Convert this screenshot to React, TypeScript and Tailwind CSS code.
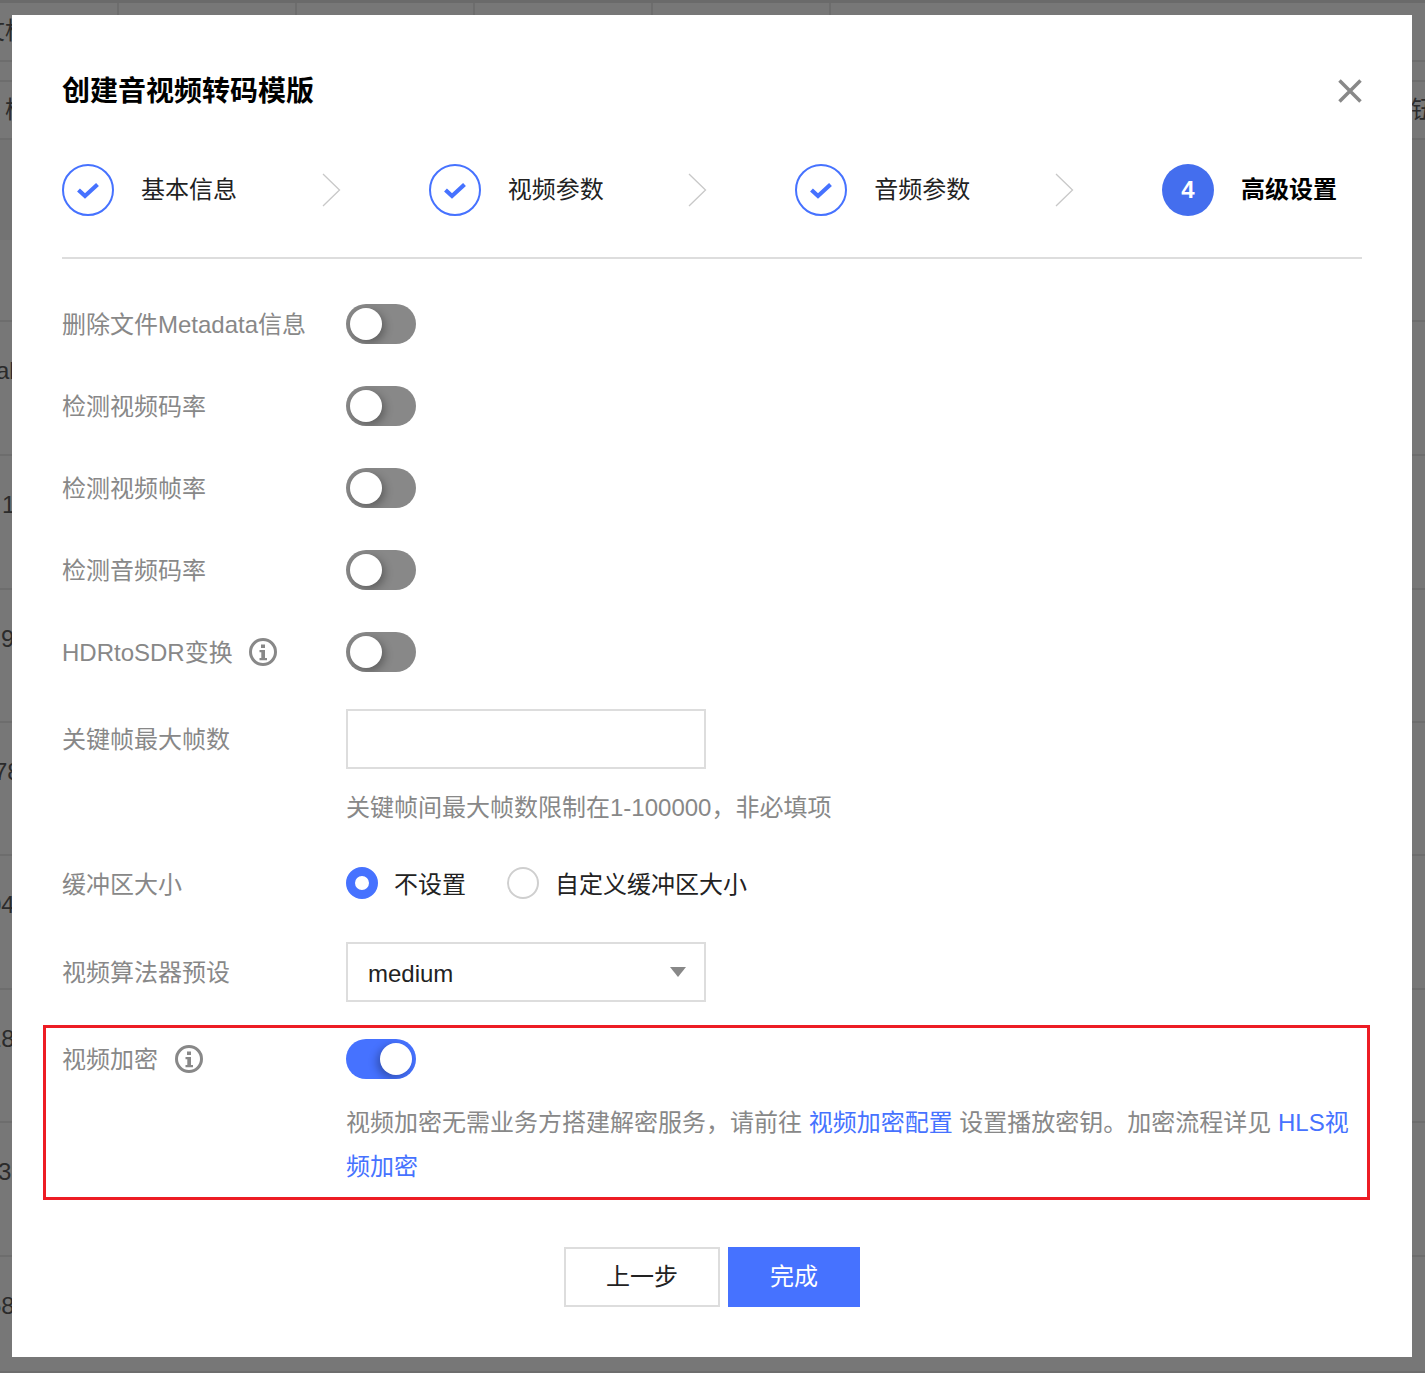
const font = "[font-family:'Liberation_Sans','Noto_Sans_CJK_SC',sans-serif]";

function Toggle({ on = false }: { on?: boolean }) {
  return (
    <div className={`relative h-10 w-[70px] overflow-hidden rounded-[20px] ${on ? "bg-[#4672ff]" : "bg-[#888888]"}`}>
      <div
        className={`absolute top-1 h-8 w-8 rounded-full bg-white ${
          on ? "left-[34px] shadow-[-3px_3px_8px_rgba(0,0,0,0.3)]" : "left-1 shadow-[3px_3px_8px_rgba(0,0,0,0.3)]"
        }`}
      />
    </div>
  );
}

function Info() {
  return (
    <svg width="28" height="28" viewBox="0 0 28 28" className="shrink-0">
      <circle cx="14" cy="14" r="12.500" fill="none" stroke="#888888" strokeWidth="3" />
      <rect x="12" y="6.500" width="4" height="3.500" fill="#888888" />
      <path d="M10.500 12h5.500v8h2v2.200h-7.500V20h1.800v-5.800h-1.800z" fill="#888888" />
    </svg>
  );
}

function Check() {
  return (
    <div className="flex h-[52px] w-[52px] items-center justify-center rounded-full border-2 border-[#4672ff]">
      <svg width="24" height="20" viewBox="0 0 24 20">
        <path d="M2.500 10L9 16L21.500 4.500" fill="none" stroke="#4672ff" strokeWidth="4.200" />
      </svg>
    </div>
  );
}

function Chevron() {
  return (
    <svg width="19" height="34" viewBox="0 0 19 34" className="shrink-0">
      <path d="M1 1l16.500 16L1 33" fill="none" stroke="#c8c8c8" strokeWidth="1.300" />
    </svg>
  );
}

function Step({ label }: { label: string }) {
  return (
    <div className="flex w-[366.67px] items-center justify-between pr-[88px]">
      <div className="flex items-center gap-[27px]">
        <Check />
        <span className="text-[24px] leading-[36px] text-[#222222]">{label}</span>
      </div>
      <Chevron />
    </div>
  );
}

function Row({ label, info }: { label: string; info?: boolean }) {
  return (
    <div className="mb-[42px] flex h-10 items-center">
      <div className="flex w-[284px] items-center gap-4 text-[24px] text-[#888888]">
        <span className="pt-px">{label}</span>
        {info && <Info />}
      </div>
      <Toggle />
    </div>
  );
}

function Radio({ on = false, label }: { on?: boolean; label: string }) {
  return (
    <div className="flex items-center gap-4">
      <div className={`h-8 w-8 rounded-full bg-white ${on ? "border-[9px] border-[#4672ff]" : "border-2 border-[#cfcfcf]"}`} />
      <span className="pt-1 text-[24px] leading-[36px] text-[#222222]">{label}</span>
    </div>
  );
}

function Backdrop() {
  const rows = [
    { h: 134, t: "ab", m: -4 },
    { h: 134, t: "1", m: 2 },
    { h: 133, t: "9", m: 1 },
    { h: 133, t: "78", m: -6 },
    { h: 134, t: "04", m: -12 },
    { h: 133, t: "18", m: -12 },
    { h: 134, t: "39", m: -2 },
    { h: 116, t: "68", m: -12 },
  ];
  return (
    <div className="flex h-full flex-col text-[24px] leading-9 text-[#2b2b2b]">
      <div className="h-[3px] shrink-0 bg-[#6a6a6a]" />
      <div className="flex h-[59px] shrink-0 border-b-2 border-[#6d6d6d]">
        {[119, 178, 178, 178, 178].map((w, i) => (
          <div key={i} className="shrink-0 border-r-2 border-[#6d6d6d]" style={{ width: w }} />
        ))}
      </div>
      <div className="flex h-5 shrink-0 border-b-2 border-[#6d6d6d]" />
      <div className="flex h-[58px] shrink-0 items-center justify-between border-b-2 border-[#6d6d6d]">
        <span className="ml-[5px]">模</span>
        <span className="-mr-[10px]">钮</span>
      </div>
      <div className="h-[100px] shrink-0 bg-[#737373]" />
      <div className="h-[82px] shrink-0 border-b-2 border-[#6d6d6d]" />
      {rows.map((r, i) => (
        <div key={i} className="shrink-0 overflow-hidden whitespace-nowrap border-b-2 border-[#6d6d6d] pt-[31px]" style={{ height: r.h }}>
          <span className="inline-block" style={{ marginLeft: r.m }}>{r.t}</span>
        </div>
      ))}
    </div>
  );
}

export default function App() {
  return (
    <div className={`relative h-[1373px] w-[1425px] overflow-hidden bg-[#777777] ${font}`}>
      <Backdrop />
      <div className="absolute left-[-19px] top-[13px] text-[24px] leading-9 text-[#2b2b2b]">文档</div>
      <div className="absolute left-3 top-[15px] h-[1342px] w-[1400px] bg-white px-[50px] pt-[55px]">
        <div className="flex h-10 items-center justify-between">
          <h1 className="pt-1 text-[28px] font-bold leading-10 text-black">创建音视频转码模版</h1>
          <svg width="24" height="24" viewBox="0 0 24 24" className="mt-[2px]">
            <path d="M1.500 1.500l21 21M22.500 1.500l-21 21" fill="none" stroke="#888888" strokeWidth="3.500" />
          </svg>
        </div>

        <div className="mt-[54px] flex items-center border-b-2 border-[#dddddd] pb-[41px]">
          <Step label="基本信息" />
          <Step label="视频参数" />
          <Step label="音频参数" />
          <div className="flex items-center gap-[27px]">
            <div className="flex h-[52px] w-[52px] items-center justify-center rounded-full bg-[#446eee] text-[24px] font-bold text-white">4</div>
            <span className="text-[24px] font-bold leading-[36px] text-black">高级设置</span>
          </div>
        </div>

        <div className="mt-[45px]">
          <Row label="删除文件Metadata信息" />
          <Row label="检测视频码率" />
          <Row label="检测视频帧率" />
          <Row label="检测音频码率" />
          <Row label="HDRtoSDR变换" info />
        </div>

        <div className="-mt-[5px] flex items-center">
          <div className="w-[284px] pt-px text-[24px] text-[#888888]">关键帧最大帧数</div>
          <input className="h-[60px] w-[360px] border-2 border-[#dddddd] bg-white" />
        </div>
        <div className="mt-[21px] pl-[284px] text-[24px] leading-[36px] text-[#888888]">关键帧间最大帧数限制在1-100000，非必填项</div>

        <div className="mt-[41px] flex h-8 items-center">
          <div className="w-[284px] pt-1 text-[24px] text-[#888888]">缓冲区大小</div>
          <div className="flex items-center gap-[41px]">
            <Radio on label="不设置" />
            <Radio label="自定义缓冲区大小" />
          </div>
        </div>

        <div className="mt-[43px] flex items-center">
          <div className="w-[284px] pt-px text-[24px] text-[#888888]">视频算法器预设</div>
          <div className="flex h-[60px] w-[360px] items-center justify-between border-2 border-[#dddddd] pl-5 pr-[18px] text-[24px] text-[#222222]">
            <span className="pt-1">medium</span>
            <svg width="16" height="10" viewBox="0 0 16 10"><path d="M0 0h16L8 10z" fill="#888888" /></svg>
          </div>
        </div>

        <div className="-ml-[19px] mt-[23px] h-[175px] w-[1327px] border-[3px] border-[#ed1c24] pl-4 pr-[5px] pt-[11px]">
          <div className="flex h-10 items-center">
            <div className="flex w-[284px] items-center gap-[17px] text-[24px] text-[#888888]">
              <span className="pt-px">视频加密</span>
              <Info />
            </div>
            <Toggle on />
          </div>
          <div className="mt-[22px] pl-[284px] text-[24px] leading-[44px] text-[#888888]">
            视频加密无需业务方搭建解密服务，请前往 <a className="text-[#4672ff]">视频加密配置</a> 设置播放密钥。加密流程详见 <a className="text-[#4672ff]">HLS视频加密</a>
          </div>
        </div>

        <div className="mt-[47px] flex justify-center gap-2">
          <button className="h-[60px] w-[156px] border-2 border-[#dddddd] bg-white text-[24px] text-[#222222]">上一步</button>
          <button className="h-[60px] w-[132px] bg-[#4672ff] text-[24px] text-white">完成</button>
        </div>
      </div>
    </div>
  );
}
